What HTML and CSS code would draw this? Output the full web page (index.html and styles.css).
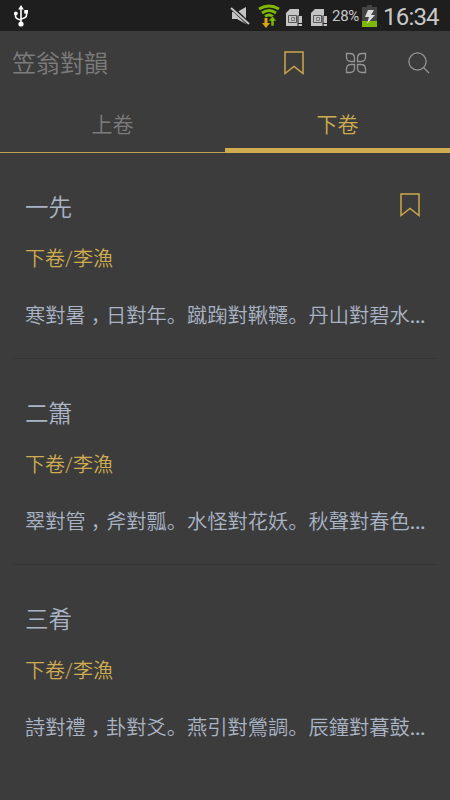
FILE: index.html
```
<!DOCTYPE html>
<html lang="zh-Hans">
<head>
  <meta charset="UTF-8" />
  <meta name="viewport" content="width=device-width, initial-scale=1.0" />
  <title>笠翁對韻</title>
  <link rel="stylesheet" href="styles.css">
</head>
<body>
  <div class="app">
    <!-- Status bar -->
    <div class="status-bar">
      <svg class="usb" width="16" height="24" viewBox="0 0 16 24" fill="none" stroke="#fff" stroke-width="1.6">
        <path d="M8 3v17M2.500 9v3q0 3 5.500 4M13.500 8v3q0 3-5.500 4" />
        <path d="M8 1l2.800 4.500H5.200z" fill="#fff" stroke="none" />
        <circle cx="8" cy="20" r="2.600" fill="#fff" stroke="none" />
        <circle cx="2.800" cy="9.500" r="1.900" fill="#fff" stroke="none" />
        <path d="M11.200 6h3.800v3.500h-3.800z" fill="#fff" stroke="none" />
      </svg>
      <div class="status-right">
        <svg width="20" height="20" viewBox="0 0 20 20">
          <path d="M2 6h5l9-5v17l-9-5H2z" fill="#c4c4c4" />
          <path d="M1 1l18 17" stroke="#1e1e1e" stroke-width="4" />
          <path d="M1 2l18 16" stroke="#c4c4c4" stroke-width="2" />
        </svg>
        <svg class="wifi" width="22" height="24" viewBox="0 0 22 24">
          <g fill="none" stroke="#7fb800" stroke-width="2.800">
            <path d="M1 5q10-6 20 0M4 9q7-5 14 0M7 12.500q4-3 8 0" />
          </g>
          <path d="M6.500 14v5H4l4 5 4-5H9.500v-5z" fill="#d9a514" />
          <path d="M13 22v-5H10.500l4-5 4 5H16v5z" fill="#7fb800" stroke="#1e1e1e" stroke-width=".5" />
        </svg>
        <svg class="sim" width="18" height="19" viewBox="0 0 18 19">
          <path d="M1 5L5 1h9v17H1z" fill="#c4c4c4" />
          <path d="M3.500 7.500h8v7h-8z" fill="none" stroke="#555" />
          <path d="M6.500 9.500h3v3h-3z" fill="none" stroke="#777" />
          <path d="M12.500 7.500h5v11h-5z" fill="#1e1e1e" />
          <path d="M13.500 8h3.500v7h-3.500zM13.500 16h3.500v2h-3.500z" fill="#c4c4c4" />
        </svg>
        <svg class="sim" width="18" height="19" viewBox="0 0 18 19">
          <path d="M1 5L5 1h9v17H1z" fill="#c4c4c4" />
          <path d="M3.500 7.500h8v7h-8z" fill="none" stroke="#555" />
          <path d="M6.500 9.500h3v3h-3z" fill="none" stroke="#777" />
          <path d="M12.500 7.500h5v11h-5z" fill="#1e1e1e" />
          <path d="M13.500 8h3.500v7h-3.500zM13.500 16h3.500v2h-3.500z" fill="#c4c4c4" />
        </svg>
        <span class="percent">28%</span>
        <svg class="battery" width="15" height="22" viewBox="0 0 15 22">
          <path d="M5 0h5v2h5v20H0V2h5z" fill="#444" />
          <path d="M0 16h15v6H0z" fill="#7fb800" />
          <path d="M6 5h6l-3 5h4l-8 9 2-7H3z" fill="#ddd" />
        </svg>
        <span class="clock">16:34</span>
      </div>
    </div>
    <!-- Header -->
    <div class="header">
      <h1>笠翁對韻</h1>
      <div class="header-icons">
        <svg class="bookmark" width="20" height="24" viewBox="0 0 20 24">
          <path d="M1 1h18v21.500l-9-7-9 7z" />
        </svg>
        <svg class="grey" width="22" height="22" viewBox="0 0 22 22">
          <path d="M1.500 1.500H5Q9.500 1.500 9.500 6V9.500H6Q1.500 9.500 1.500 5z" />
          <path d="M20.500 1.500H17Q12.500 1.500 12.500 6V9.500H16Q20.500 9.500 20.500 5z" />
          <path d="M1.500 20.500H5Q9.500 20.500 9.500 16V12.500H6Q1.500 12.500 1.500 17z" />
          <path d="M20.500 20.500H17Q12.500 20.500 12.500 16V12.500H16Q20.500 12.500 20.500 17z" />
        </svg>
        <svg class="grey" width="22" height="22" viewBox="0 0 22 22">
          <circle cx="9.500" cy="9.500" r="8.600" />
          <path d="M15.500 15.500l5.500 5.500" />
        </svg>
      </div>
    </div>
    <!-- Tabs -->
    <div class="tabs">
      <div class="tab">上卷</div>
      <div class="tab active">下卷</div>
    </div>
    <!-- Chapters -->
    <div class="list">
      <div class="item">
        <div class="item-top">
          <h2>一先</h2>
          <svg class="bookmark" width="20" height="24" viewBox="0 0 20 24">
            <path d="M1 1h18v21.500l-9-7-9 7z" />
          </svg>
        </div>
        <div class="author">下卷/李漁</div>
        <div class="excerpt">寒對暑<span class="comma">，</span>日對年。蹴踘對鞦韆。丹山對碧水<span class="dots">...</span></div>
      </div>
      <div class="item">
        <div class="item-top">
          <h2>二簫</h2>
        </div>
        <div class="author">下卷/李漁</div>
        <div class="excerpt">翠對管<span class="comma">，</span>斧對瓢。水怪對花妖。秋聲對春色<span class="dots">...</span></div>
      </div>
      <div class="item">
        <div class="item-top">
          <h2>三肴</h2>
        </div>
        <div class="author">下卷/李漁</div>
        <div class="excerpt">詩對禮<span class="comma">，</span>卦對爻。燕引對鶯調。辰鐘對暮鼓<span class="dots">...</span></div>
      </div>
    </div>
  </div>
</body>
</html>
```
FILE: styles.css
```
/* Global Styles */
* {
  box-sizing: border-box;
}
body {
  margin: 0;
  background: #3c3c3c;
  font-family: Roboto, "Noto Sans CJK SC", sans-serif;
  font-weight: 350;
}
h1, h2 {
  margin: 0;
  font-weight: 350;
}
svg {
  display: block;
  flex-shrink: 0;
}
.app {
  height: 800px;
  overflow: hidden;
}
/* Status Bar */
.status-bar {
  height: 31px;
  padding: 0 11px 0 13px;
  background: #1e1e1e;
  display: flex;
  justify-content: space-between;
  align-items: center;
}
.usb {
  margin-top: 1px;
}
.status-right {
  display: flex;
  align-items: center;
  color: #c8c8c8;
}
.wifi {
  margin: 0 5px 0 8px;
}
.sim {
  margin: 3px 7px 0 0;
}
.percent {
  width: 28px;
  margin: 1px 2px 0 -3px;
  font-size: 15px;
  font-weight: 400;
  letter-spacing: -0.3px;
}
.battery {
  margin: 1px 6px 0 0;
}
.clock {
  width: 56px;
  font-size: 24px;
  line-height: 30px;
  font-weight: 400;
  letter-spacing: -0.8px;
  margin-top: 3px;
}
/* Header */
.header {
  height: 63px;
  padding: 0 20px 0 12px;
  display: flex;
  justify-content: space-between;
  align-items: center;
}
.header h1 {
  font-size: 24px;
  line-height: 30px;
  padding-top: 2px;
  color: #7c7c7c;
}
.header-icons {
  display: flex;
  align-items: center;
  gap: 41px;
}
.bookmark {
  fill: none;
  stroke: #cba64b;
  stroke-width: 1.5;
}
.grey {
  fill: none;
  stroke: #949494;
  stroke-width: 1.3;
}
/* Tabs */
.tabs {
  height: 59px;
  display: flex;
}
.tab {
  flex: 1;
  text-align: center;
  font-size: 21px;
  line-height: 63px;
  color: #7c7c7c;
  border-bottom: 1px solid #c0a04e;
}
.tab.active {
  color: #d0ac50;
  border-bottom: 5px solid #d0ac50;
}
/* List */
.list {
  padding: 0 13px;
}
.item {
  height: 206px;
  padding: 40px 13px 0 12px;
  border-bottom: 1px solid #353535;
}
.item:last-child {
  border-bottom: none;
}
.item-top {
  height: 30px;
  padding-right: 4px;
  display: flex;
  justify-content: space-between;
}
.item h2 {
  font-size: 23.5px;
  line-height: 30px;
  color: #aab4c5;
}
.author {
  margin-top: 21px;
  font-size: 20px;
  line-height: 30px;
  color: #d0ac50;
}
.excerpt {
  margin-top: 27px;
  font-size: 20.25px;
  line-height: 30px;
  color: #aab4c5;
  white-space: nowrap;
}
/* half-width comma centred in a full-width cell */
.comma {
  display: inline-block;
  width: 20.25px;
  padding-left: 5px;
  font-feature-settings: "halt";
}
.dots {
  font-weight: 500;
  letter-spacing: -0.5px;
}
```
